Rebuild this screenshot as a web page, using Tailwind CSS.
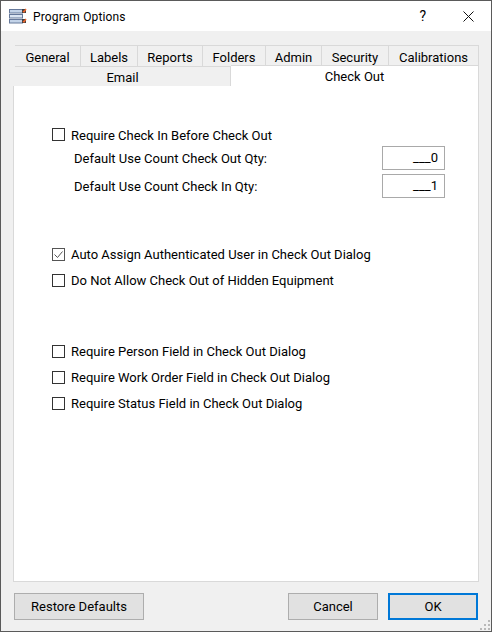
<!DOCTYPE html>
<html lang="en">
<head>
  <meta charset="UTF-8" />
  <title>Program Options</title>
  <script src="https://cdn.jsdelivr.net/npm/@tailwindcss/browser@4"></script>
</head>
<body class="bg-[#f0f0f0]">
  <div class="relative flex flex-col w-[492px] h-[632px] border border-[#5a5a5a] bg-[#f0f0f0] text-[13px] text-black font-['Roboto',sans-serif] overflow-hidden">

    <!-- Title bar -->
    <div class="flex items-center h-[30px] bg-white shrink-0">
      <svg class="ml-[8px] w-[18px] h-[16px]" viewBox="0 0 18 16">
        <rect x="0.5" y="1.5" width="13" height="3.5" fill="#c3d3e8" stroke="#65789a" />
        <rect x="0.5" y="6.5" width="13" height="3.5" fill="#dbe5f2" stroke="#65789a" />
        <rect x="0.5" y="11.5" width="13" height="3.5" fill="#c3d3e8" stroke="#65789a" />
        <rect x="13" y="1" width="4" height="4" fill="#3f3f3f" />
        <rect x="13" y="11" width="4" height="4" fill="#3f3f3f" />
        <path d="M14 3l1 1 2-3M14 13l1 1 2-3" fill="none" stroke="#f0662c" stroke-width="1.4" />
      </svg>
      <span class="ml-[6px] text-[12px] pt-[1px] tracking-[0.15px]">Program Options</span>
      <span class="ml-auto text-[14px] pt-[1px] mr-[37px]">?</span>
      <svg class="mr-[17px] w-[11px] h-[11px]" viewBox="0 0 11 11">
        <path d="M0.5 0.5l10 10M10.5 0.5l-10 10" stroke="#111" stroke-width="1" fill="none" />
      </svg>
    </div>

    <!-- Tabs -->
    <div class="flex flex-col ml-[12px] w-[466px] mt-[14px] shrink-0">
      <div class="flex ml-[2px] h-[21px] border-t border-[#d9d9d9]">
        <div class="flex items-center justify-center pt-[3px] w-[66px] border-r border-[#d9d9d9]">General</div>
        <div class="flex items-center justify-center pt-[3px] w-[57px] border-r border-[#d9d9d9]">Labels</div>
        <div class="flex items-center justify-center pt-[3px] w-[65px] border-r border-[#d9d9d9]">Reports</div>
        <div class="flex items-center justify-center pt-[3px] w-[63px] border-r border-[#d9d9d9]">Folders</div>
        <div class="flex items-center justify-center pt-[3px] w-[56px] border-r border-[#d9d9d9]">Admin</div>
        <div class="flex items-center justify-center pt-[3px] w-[67px] border-r border-[#d9d9d9]">Security</div>
        <div class="flex items-center justify-center pt-[3px] w-[90px] border-r border-[#d9d9d9]">Calibrations</div>
      </div>
      <div class="flex h-[21px] border-b border-[#d9d9d9]">
        <div class="flex items-center justify-center pt-[3px] ml-[2px] w-[216px] border-t border-r border-[#d9d9d9]">Email</div>
        <div class="relative z-10 flex-1 -mt-[1px] h-[23px] bg-white border-t border-r border-[#d9d9d9] flex items-center justify-center">Check Out</div>
      </div>
    </div>

    <!-- Check Out page -->
    <div class="flex flex-col w-[466px] h-[496px] ml-[12px] -mt-[1px] bg-white border-x border-b border-[#d9d9d9] pt-[37px] pl-[38px]">
      <label class="flex items-center h-[23px] gap-[6px]">
        <span class="w-[13px] h-[13px] border border-[#333]"></span>
        <span class="pt-[2px]">Require Check In Before Check Out</span>
      </label>
      <div class="flex items-center h-[24px] pl-[22px]">
        <span class="pt-[2px]">Default Use Count Check Out Qty:</span>
        <div class="ml-auto mr-[33px] w-[63px] h-[24px] border border-[#a9a9a9] flex items-center justify-end pr-[6px]">___0</div>
      </div>
      <div class="flex items-center h-[24px] pl-[22px] mt-[4px]">
        <span class="pt-[2px]">Default Use Count Check In Qty:</span>
        <div class="ml-auto mr-[33px] w-[63px] h-[24px] border border-[#a9a9a9] flex items-center justify-end pr-[6px]">___1</div>
      </div>

      <label class="flex items-center h-[24px] gap-[6px] mt-[44px]">
        <span class="w-[13px] h-[13px] border border-[#555] flex items-center justify-center">
          <svg class="w-[11px] h-[11px]" viewBox="0 0 11 11"><path d="M1.5 5.5l3 3 5-6" fill="none" stroke="#555" stroke-width="1" /></svg>
        </span>
        <span class="pt-[2px]">Auto Assign Authenticated User in Check Out Dialog</span>
      </label>
      <label class="flex items-center h-[24px] gap-[6px] mt-[2px]">
        <span class="w-[13px] h-[13px] border border-[#333]"></span>
        <span class="pt-[2px]">Do Not Allow Check Out of Hidden Equipment</span>
      </label>

      <label class="flex items-center h-[24px] gap-[6px] mt-[47px]">
        <span class="w-[13px] h-[13px] border border-[#333]"></span>
        <span class="pt-[2px]">Require Person Field in Check Out Dialog</span>
      </label>
      <label class="flex items-center h-[24px] gap-[6px] mt-[2px]">
        <span class="w-[13px] h-[13px] border border-[#333]"></span>
        <span class="pt-[2px]">Require Work Order Field in Check Out Dialog</span>
      </label>
      <label class="flex items-center h-[24px] gap-[6px] mt-[2px]">
        <span class="w-[13px] h-[13px] border border-[#333]"></span>
        <span class="pt-[2px]">Require Status Field in Check Out Dialog</span>
      </label>
    </div>

    <!-- Footer buttons -->
    <div class="flex items-center ml-[13px] mr-[13px] mt-[11px]">
      <button class="w-[130px] h-[27px] pt-[1px] bg-[#e1e1e1] border border-[#adadad]">Restore Defaults</button>
      <button class="ml-auto w-[90px] h-[27px] pt-[1px] bg-[#e1e1e1] border border-[#adadad]">Cancel</button>
      <button class="ml-[10px] w-[90px] h-[27px] pt-[1px] bg-[#e1e1e1] border-2 border-[#0078d7]">OK</button>
    </div>

    <!-- Resize grip -->
    <svg class="absolute right-[1px] bottom-[1px] w-[10px] h-[10px]" viewBox="0 0 10 10" fill="#b8b8b8">
      <rect x="8" y="0" width="2" height="2" />
      <rect x="4" y="4" width="2" height="2" />
      <rect x="8" y="4" width="2" height="2" />
      <rect x="0" y="8" width="2" height="2" />
      <rect x="4" y="8" width="2" height="2" />
      <rect x="8" y="8" width="2" height="2" />
    </svg>
  </div>
</body>
</html>
